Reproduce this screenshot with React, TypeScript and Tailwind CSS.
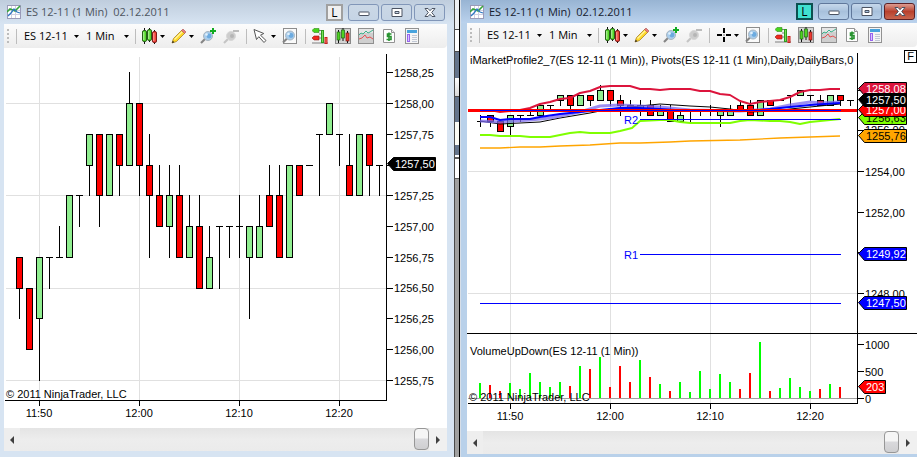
import React from "react";
import clsx from "clsx";

// Levels are quarter points below 1258, so 0 = 1258,00 and 4 = 1257,00
// [direction, body top, body bottom, high, low]
type Bar = ["u" | "d" | "n", number, number, number, number];

const BARS: Bar[] = [
  ["d", 5, 6, 5, 7],
  ["d", 6, 8, 6, 8],
  ["u", 5, 7, 5, 9],
  ["n", 5, 5, 5, 6],
  ["n", 5, 5, 4, 5],
  ["u", 3, 5, 3, 5],
  ["n", 3, 3, 3, 4],
  ["u", 1, 2, 1, 3],
  ["d", 1, 3, 1, 4],
  ["u", 1, 3, 1, 3],
  ["d", 1, 2, 1, 3],
  ["u", 0, 2, -1, 2],
  ["d", 0, 2, 0, 3],
  ["d", 2, 3, 1, 5],
  ["d", 3, 4, 2, 4],
  ["u", 3, 4, 2, 5],
  ["d", 3, 5, 2, 5],
  ["u", 4, 5, 3, 5],
  ["d", 4, 6, 3, 6],
  ["u", 5, 6, 4, 6],
  ["n", 4, 4, 4, 6],
  ["n", 4, 4, 4, 5],
  ["n", 4, 4, 3, 5],
  ["u", 4, 5, 4, 7],
  ["u", 4, 5, 3, 5],
  ["d", 3, 4, 2, 4],
  ["d", 3, 5, 2, 5],
  ["u", 2, 5, 2, 5],
  ["d", 2, 3, 2, 3],
  ["n", 2, 2, 2, 2],
  ["n", 1, 1, 1, 3],
  ["u", 0, 1, 0, 1],
  ["n", 1, 1, 1, 2],
  ["d", 2, 3, 1, 3],
  ["u", 1, 3, 1, 3],
  ["d", 1, 2, 1, 3],
  ["n", 2, 2, 2, 3],
];

// [up, top of the bar]
const VOLUME: [boolean, number][] = [
  [true, 383], [false, 385], [false, 391], [true, 383], [true, 389], [true, 373], [true, 382],
  [true, 387], [true, 382], [false, 386], [true, 366], [false, 369], [true, 357], [false, 387],
  [false, 366], [false, 382], [true, 360], [false, 377], [true, 384], [false, 391], [true, 382],
  [true, 392], [true, 371], [true, 389], [true, 374], [true, 382], [false, 389], [false, 373],
  [true, 342], [false, 391], [true, 388], [true, 378], [true, 387], [true, 391], [false, 389],
  [true, 384], [false, 387],
];

const TIMES = ["11:50", "12:00", "12:10", "12:20"];
const PRICES = [
  "1258,25", "1258,00", "1257,75", "1257,50", "1257,25", "1257,00",
  "1256,75", "1256,50", "1256,25", "1256,00", "1255,75",
];

const Candles = ({ bars, x0, y0, step }: { bars: Bar[]; x0: number; y0: number; step: number }) => {
  const y = (level: number) => Math.round(y0 + level * step);
  return (
    <g shapeRendering="crispEdges">
      {bars.map(([dir, top, bottom, high, low], i) => {
        const x = x0 + i * 10;
        return (
          <g key={i}>
            <rect x={x} y={y(high)} width="1" height={y(low) - y(high) + 1} fill="#000" />
            <rect x={x - 3} y={y(top)} width="7" height={y(bottom) - y(top) + 1} fill="#000" />
            {dir !== "n" && (
              <rect
                x={x - 2}
                y={y(top) + 1}
                width="5"
                height={y(bottom) - y(top) - 1}
                fill={dir === "u" ? "#90ee90" : "#ff0000"}
              />
            )}
          </g>
        );
      })}
    </g>
  );
};

const PriceTag = ({ x, y, label, fill, color = "#fff", width = 48 }: {
  x: number;
  y: number;
  label: string;
  fill: string;
  color?: string;
  width?: number;
}) => (
  <g>
    <path
      d={`M${x + 0.5} ${y + 0.5}l6 -6h${width - 6}v13h-${width - 6}z`}
      fill={fill}
      stroke="#000"
    />
    <text x={x + 8} y={y + 5} fill={color}>{label}</text>
  </g>
);

const LeftChart = () => (
  <svg
    viewBox="4 48 443 380"
    className="block w-full bg-white text-[11px]"
    fontFamily="'Liberation Sans', Arial, sans-serif"
    role="img"
    aria-label="ES 12-11 candlestick chart"
  >
    <g shapeRendering="crispEdges" fill="#e0e0e0">
      {TIMES.map((t, i) => <rect key={t} x={39 + i * 100} y="57" width="1" height="343" />)}
      {[103, 195, 288, 380].map((y) => <rect key={y} x="6" y={y} width="380" height="1" />)}
    </g>
    <Candles bars={BARS} x0={19} y0={103} step={30.78} />
    <g shapeRendering="crispEdges">
      <rect x="386" y="54" width="1" height="347" />
      <rect x="5" y="400" width="382" height="1" />
      {TIMES.map((t, i) => <rect key={t} x={39 + i * 100} y="401" width="1" height="5" />)}
      {PRICES.map((p, i) => (
        <rect key={p} x="387" y={Math.round(72.2 + i * 30.78)} width="6" height="1" />
      ))}
    </g>
    {TIMES.map((t, i) => <text key={t} x={39 + i * 100} y="417" textAnchor="middle">{t}</text>)}
    {PRICES.map((p, i) => p !== "1257,50" && (
      <text key={p} x="394" y={Math.round(77 + i * 30.78)}>{p}</text>
    ))}
    <PriceTag x={387} y={163} label="1257,50" fill="#000" />
    <text x="6" y="398">© 2011 NinjaTrader, LLC</text>
  </svg>
);

const RightChart = () => (
  <svg
    viewBox="467 47 450 384"
    className="block w-full bg-white text-[11px]"
    fontFamily="'Liberation Sans', Arial, sans-serif"
    role="img"
    aria-label="ES 12-11 chart with pivots and volume"
  >
    <defs>
      <clipPath id="plot">
        <rect x="467" y="48" width="390" height="30" />
      </clipPath>
    </defs>
    <g shapeRendering="crispEdges" fill="#e0e0e0">
      {TIMES.map((t, i) => <rect key={t} x={510 + i * 100} y="54" width="1" height="349" />)}
      <rect x="468" y="171" width="389" height="1" />
      <rect x="468" y="293" width="389" height="1" />
    </g>

    <Candles bars={[["n", 6, 6, 5, 7], ...BARS]} x0={480} y0={90} step={5.09} />

    {/* indicators */}
    <g fill="none" strokeLinejoin="round">
      <polyline stroke="#ffa500" strokeWidth="1.3" points="480,148 500,148 520,147 540,147 560,146 590,145 620,143 640,143 670,142 690,141 740,140 780,138 810,137 840,136" />
      <polyline stroke="#7fff00" strokeWidth="2" points="480,135 490,135 500,136 520,136 530,137 550,137 560,135 570,133 580,132 590,133 610,133 620,131 632,128 640,121 660,120 670,120 680,122 690,123 730,123 740,121 750,120 770,121 780,121 790,122 800,124 810,122 820,121 840,119" />
      <polyline stroke="#000" strokeWidth="1" points="480,121 500,124 520,123 540,122 560,118 590,113 610,109 640,106 660,104 690,106 710,107 730,109 750,112 775,111 790,109 810,107 830,105 840,104" />
      <polyline stroke="#7b68ee" strokeOpacity="0.75" strokeWidth="3" points="480,121 500,122 530,120 550,118 565,115 580,112 600,106 620,105 640,106 660,107 690,110 740,111 770,109 790,105 810,102 820,103 840,102" />
      <polyline stroke="#0000ff" strokeWidth="2" points="480,117 490,117 500,120 510,119 530,119 540,117 560,114 580,112 600,110 620,108 640,108 660,109 690,111 720,110 750,111 770,109 790,107 810,105 840,103" />
      <polyline stroke="#dc143c" strokeWidth="2" points="480,111 490,110 500,112 520,110 530,108 540,104 550,102 560,99 570,98 580,93 590,91 600,87 610,86 630,86 640,89 650,89 660,90 670,89 690,89 700,91 710,91 720,94 730,95 740,101 750,104 760,102 770,101 780,100 790,97 800,92 810,90 820,90 830,89 840,89" />
    </g>
    <g shapeRendering="crispEdges">
      <rect x="468" y="109" width="389" height="3" fill="#ff0000" />
      <rect x="480" y="110" width="361" height="1" fill="#0000ff" />
      <rect x="640" y="119" width="201" height="1" fill="#0000ff" />
      <rect x="640" y="254" width="201" height="1" fill="#0000ff" />
      <rect x="480" y="303" width="361" height="1" fill="#0000ff" />
    </g>
    <text x="624" y="124" fill="#0000ff">R2</text>
    <text x="624" y="259" fill="#0000ff">R1</text>

    {/* volume panel */}
    <g shapeRendering="crispEdges">
      <rect x="468" y="398" width="389" height="1" fill="#a0a0a0" />
      {VOLUME.map(([up, top], i) => (
        <rect key={i} x={479 + i * 10} y={top} width="2" height={398 - top} fill={up ? "#00ff00" : "#ff0000"} />
      ))}
    </g>
    <text x="470" y="355">VolumeUpDown(ES 12-11 (1 Min))</text>
    <text x="469" y="401">© 2011 NinjaTrader, LLC</text>

    {/* axes */}
    <g shapeRendering="crispEdges">
      <rect x="857" y="53" width="1" height="351" />
      <rect x="467" y="333" width="450" height="1" />
      <rect x="468" y="403" width="390" height="1" />
      {TIMES.map((t, i) => <rect key={t} x={510 + i * 100} y="404" width="1" height="5" />)}
      {[90, 130, 171, 212, 252, 293, 344, 371, 398].map((y) => (
        <rect key={y} x="858" y={y} width="6" height="1" />
      ))}
    </g>
    {TIMES.map((t, i) => <text key={t} x={510 + i * 100} y="420" textAnchor="middle">{t}</text>)}
    <text x="865" y="134">1256,00</text>
    <text x="865" y="176">1254,00</text>
    <text x="865" y="217">1252,00</text>
    <text x="865" y="298">1248,00</text>
    <text x="865" y="349">1000</text>
    <text x="865" y="376">500</text>
    <text x="865" y="403">0</text>
    <PriceTag x={858} y={117} label="1256,63" fill="#7fff00" color="#000" />
    <PriceTag x={858} y={135} label="1255,76" fill="#ffa500" color="#000" />
    <PriceTag x={858} y={109} label="1257,00" fill="#ff0000" />
    <PriceTag x={858} y={88} label="1258.08" fill="#dc143c" />
    <PriceTag x={858} y={99} label="1257,50" fill="#000" />
    <PriceTag x={858} y={253} label="1249,92" fill="#0000ff" />
    <PriceTag x={858} y={302} label="1247,50" fill="#0000ff" />
    <PriceTag x={858} y={386} label="203" fill="#ff0000" width={27} />
    <text x="470" y="64" clipPath="url(#plot)">
      iMarketProfile2_7(ES 12-11 (1 Min)), Pivots(ES 12-11 (1 Min),Daily,DailyBars,0
    </text>
  </svg>
);

const Arrow = ({ className }: { className?: string }) => (
  <svg viewBox="0 0 5 3" className={clsx("w-[5px] h-[3px] shrink-0", className)}>
    <path d="M0 0h5L2.5 3z" fill="#000" />
  </svg>
);

const Icon = ({ children }: { children: React.ReactNode }) => (
  <svg viewBox="0 0 16 16" className="w-4 h-4 shrink-0">{children}</svg>
);

const Separator = () => <div className="w-px h-[15px] shrink-0 bg-[#bdbdbd]"></div>;

const Tool = ({ label, menu, children }: { label: string; menu?: boolean; children: React.ReactNode }) => (
  <button
    aria-label={label}
    className={clsx("flex items-center shrink-0 gap-0.5", menu ? "w-[23px]" : "w-[17px]")}
  >
    <Icon>{children}</Icon>
    {menu && <Arrow />}
  </button>
);

const Picker = ({ label, value, className }: { label: string; value: string; className: string }) => (
  <div className={clsx("relative shrink-0", className)}>
    <select aria-label={label} className="block w-full appearance-none bg-transparent pl-px text-[11px] leading-4 outline-none">
      <option>{value}</option>
    </select>
    <Arrow className="absolute right-0 top-[7px] pointer-events-none" />
  </div>
);

const Lens = ({ cx, cy }: { cx: number; cy: number }) => (
  <>
    <path d={`M${cx - 3} ${cy + 3}L${cx - 7} ${cy + 7}`} stroke="#858585" strokeWidth="2.2" />
    <circle cx={cx} cy={cy} r="4.5" fill="#a9cdec" stroke="#a8b5c0" />
    <circle cx={cx + 1} cy={cy} r="2.4" fill="#6cabe0" />
    <circle cx={cx - 1.5} cy={cy - 1.5} r="1.3" fill="#e2f1fc" />
  </>
);

const Toolbar = ({ cross }: { cross?: boolean }) => (
  <div className="h-6 pl-[3px] flex items-center gap-1.5 overflow-hidden rounded-br bg-gradient-to-b from-[#fcfcfc] to-[#ededed]">
    <div className="w-[3px] shrink-0 flex flex-col gap-0.5">
      <i className="block h-0.5 w-0.5 bg-[#bcbcbc]"></i>
      <i className="block h-0.5 w-0.5 bg-[#bcbcbc]"></i>
      <i className="block h-0.5 w-0.5 bg-[#bcbcbc]"></i>
      <i className="block h-0.5 w-0.5 bg-[#bcbcbc]"></i>
    </div>
    <Separator />
    <Picker label="Instrument" value="ES 12-11" className="w-14" />
    <Picker label="Interval" value="1 Min" className="w-11" />
    <Separator />
    <Tool label="Chart style" menu>
      <path d="M2.5 0v16M7.5 0v14M12.5 2v14" stroke="#111" />
      <rect x="0.5" y="2.5" width="4" height="11" rx="1.5" fill="#53d728" stroke="#275e19" />
      <rect x="5.5" y="1.5" width="4" height="11" rx="1.5" fill="#53d728" stroke="#275e19" />
      <rect x="10.5" y="3.5" width="4" height="11" rx="1.5" fill="#f0443a" stroke="#7c1c18" />
      <path d="M1.8 4v8M6.800 3v8" stroke="#c4f7b0" />
      <path d="M11.800 5v8" stroke="#ffaca6" />
    </Tool>
    <Tool label="Drawing tools" menu>
      <path d="M1 15l1.5-4.5L11 2l3 3-8.500 8.500z" fill="#ffd927" stroke="#a8812a" strokeWidth="0.8" />
      <path d="M3.500 11.500L11.500 3.500" stroke="#fff3a0" strokeWidth="1.200" />
      <path d="M10.500 2.500L12 1l3 3-1.500 1.500z" fill="#e77c7c" stroke="#a75050" strokeWidth="0.6" />
      <path d="M1 15l.8-2.300 1.500 1.500z" fill="#222" />
    </Tool>
    <Tool label="Zoom in">
      <Lens cx={8} cy={8} />
      <path d="M13 0v6M10 3h6" stroke="#11ab22" strokeWidth="2" />
    </Tool>
    <Tool label="Zoom out">
      <path d="M5 11L1 15" stroke="#c4c4c4" strokeWidth="2.200" />
      <circle cx="8" cy="8" r="4.500" fill="#cdcdcd" stroke="#d8d8d8" />
      <circle cx="9" cy="8" r="2" fill="#b5b5b5" />
      <path d="M10 3h6" stroke="#bcbcbc" strokeWidth="2" />
    </Tool>
    <Separator />
    <Tool label="Cursor" menu>
      {cross ? (
        <path d="M7 1h2v5H7zM7 10h2v5H7zM1 7h5v2H1zM10 7h5v2h-5zM7.500 7.500h1v1h-1z" fill="#000" />
      ) : (
        <path d="M1 1.500l2.500 10 2.300-2.800L11 14.500l2-2-5.500-5.300 3.300-1.700z" fill="#fff" stroke="#555" />
      )}
    </Tool>
    <Tool label="Zoom frame">
      <rect x="1.500" y="0.500" width="13" height="15" fill="#fafafa" stroke="#8d8d8d" />
      <Lens cx={8} cy={7.500} />
    </Tool>
    <Separator />
    <Tool label="Chart trader">
      <path d="M7 2.500h4M7 6h4M7 10h4M0 15h16" stroke="#7e7e7e" />
      <path d="M0 2.500L2 .5h5v4H2z" fill="#46d61b" stroke="#338a1b" strokeWidth="0.600" />
      <path d="M0 10l2-2h5v4H2z" fill="#f02a1e" stroke="#8d1c15" strokeWidth="0.600" />
      <path d="M10.500 2v13" stroke="#2f9a20" strokeWidth="3" />
      <path d="M10.500 3v11" stroke="#73e256" />
      <path d="M14 9v7" stroke="#c3221d" strokeWidth="3" />
      <path d="M14 10v5" stroke="#ff746d" />
    </Tool>
    <Tool label="Data series">
      <rect x="0.500" y="0.500" width="15" height="15" fill="#d4d4d4" stroke="#8a8a8a" />
      <path d="M3.500 2v13M8 0v13M12.500 3v12" stroke="#111" />
      <rect x="2" y="4" width="3" height="8" fill="#4ed221" stroke="#236018" strokeWidth="0.700" />
      <rect x="6.500" y="2" width="3" height="8" fill="#4ed221" stroke="#236018" strokeWidth="0.700" />
      <rect x="11" y="5" width="3" height="8" fill="#ef3930" stroke="#761a16" strokeWidth="0.700" />
    </Tool>
    <Tool label="Indicators">
      <rect x="0.500" y="0.500" width="15" height="15" fill="#cfcfcf" stroke="#8f8f8f" />
      <path d="M1 1h14v4H1z" fill="#e5e5e5" />
      <path d="M1 7l2-2 2 1 3-3 2 2 2-1 3-2" fill="none" stroke="#3bb28a" />
      <path d="M1 11l3-1 3-3 2 3 3-1 3 2" fill="none" stroke="#e45353" />
    </Tool>
    <Tool label="Strategies">
      <path d="M2.500 1.500h8l3 3v10h-11z" fill="#fff" stroke="#929292" />
      <path d="M10.500 1.500v3h3" fill="#eee" stroke="#929292" />
      <path d="M10.500 6H6.500v2.500h3.500V11.500H5.500M8 4.500v8.500" fill="none" stroke="#279330" strokeWidth="1.600" />
    </Tool>
    <Tool label="Properties">
      <rect x="1.500" y="0.500" width="13" height="15" fill="#f5f5f5" stroke="#929292" />
      <path d="M3 3.500h10" stroke="#47a3dd" strokeWidth="3" />
      <rect x="3.500" y="6.500" width="2" height="7" fill="#d8c4ff" stroke="#9864ee" />
      <path d="M8 7.500h5M8 9.500h5M8 11.500h5M8 13.500h5" stroke="#c1c8d5" />
    </Tool>
  </div>
);

const CaptionButton = ({ label, active, close, children }: {
  label: string;
  active?: boolean;
  close?: boolean;
  children: React.ReactNode;
}) => (
  <button
    aria-label={label}
    className={clsx(
      "w-[31px] h-[17px] flex items-center justify-center rounded-[3px] border bg-gradient-to-b",
      !active && "border-[#8196b8] from-[#cbd8e6] to-[#c5d4e5]",
      active && !close && "border-[#60789b] from-[#c6d8eb] via-[#a8c1dc] to-[#b7cfe8]",
      active && close && "border-[#5c2025] from-[#dc9b91] via-[#b8402d] to-[#c8654e]"
    )}
  >
    <svg viewBox="0 0 12 9" className="w-3 h-[9px]" fill="#fff" stroke="#4b5362">{children}</svg>
  </button>
);

const TitleBar = ({ active }: { active?: boolean }) => (
  <div
    className={clsx(
      "flex items-center bg-gradient-to-b",
      active
        ? "h-[23px] pl-[9px] pr-0.5 from-[#98b4d3] to-[#bad2ed]"
        : "h-6 pl-[7px] pr-[9px] from-[#bfcddd] to-[#d7e4f2]"
    )}
  >
    <svg viewBox="0 0 14 14" className="w-3.5 h-3.5 shrink-0">
      <rect x="0.500" y="0.500" width="13" height="13" fill="#fff" stroke="#9a9ab8" />
      <path d="M4.500 1v12M8.500 1v12M1 5.500h12M1 9.500h12" stroke="#cfcfe2" />
      <path d="M0 7l3-3 3 1 2 1 5-5" fill="none" stroke="#36a43b" strokeWidth="1.600" />
      <path d="M1 11l3-3 3-4 3 3 3 1" fill="none" stroke="#2f78c4" strokeWidth="1.300" />
    </svg>
    <h2 className={clsx("ml-[5px] flex-1 truncate whitespace-pre text-[11px] leading-4", active ? "text-[#15202e]" : "text-[#4d5560]")}>
      {"ES 12-11 (1 Min)  02.12.2011"}
    </h2>
    <div className="flex gap-0.5">
      <button
        aria-label="Link"
        className={clsx(
          "w-[17px] h-[17px] mr-[3px] border-2 text-xs leading-[13px]",
          active ? "border-[#0c5050] bg-[#40e0d0]" : "border-[#a0a0a0] bg-[#f0f0f0]"
        )}
      >
        L
      </button>
      <CaptionButton label="Minimize" active={active}>
        <rect x="1" y="4" width="10" height="3.500" rx="0.500" />
      </CaptionButton>
      <CaptionButton label="Maximize" active={active}>
        <path fillRule="evenodd" d="M1 .5h10v8H1zM4 3.500h4v2H4z" />
      </CaptionButton>
      <CaptionButton label="Close" active={active} close>
        <path d="M1 .5h3l2 2.200L8 .5h3L7.700 4.500 11 8.500H8L6 6.300 4 8.500H1l3.300-4z" />
      </CaptionButton>
    </div>
  </div>
);

const ScrollBar = () => (
  <div className="h-[23px] flex items-center bg-gradient-to-b from-[#e4e4e4] via-[#ededed] to-[#ebebeb]">
    <button aria-label="Scroll left" className="w-4 h-full flex items-center justify-center bg-[#eeeeee]">
      <svg viewBox="0 0 4 8" className="w-1 h-2"><path d="M4 0v8L0 4z" fill="#404040" /></svg>
    </button>
    <div className="flex-1 h-full flex justify-end">
      <div
        role="scrollbar"
        aria-label="Time"
        aria-controls="charts"
        aria-valuenow={100}
        className="w-[15px] h-[22px] rounded-sm border border-[#979797] bg-gradient-to-b from-[#f5f5f5] from-45% via-[#d9d9dc] via-50% to-[#cfcfd1]"
      ></div>
    </div>
    <button aria-label="Scroll right" className="w-[18px] h-full flex items-center justify-center bg-[#f0f0f0]">
      <svg viewBox="0 0 4 8" className="w-1 h-2"><path d="M0 0v8l4-4z" fill="#404040" /></svg>
    </button>
  </div>
);

// Sliver of the windows that lie behind the two charts
const Gutter = () => (
  <div className="flex border-l border-r border-l-[#4a4a4a] border-r-[#d6dee8] bg-[#a0a0a0]">
    <div className="flex-1 flex flex-col">
      <div className="h-[30px] bg-[#eef0f2] border-b border-[#4a4a4a]"></div>
      <div className="h-[22px] bg-white border-b border-[#4a4a4a]"></div>
      <div className="h-[26px] bg-[#64748b]"></div>
      <div className="h-[19px] bg-gradient-to-b from-white to-[#d9d9d9] border-b border-[#4a4a4a]"></div>
      <div className="h-[25px] bg-[#64748b]"></div>
      <div className="h-[23px] bg-[#fbfbf4]"></div>
      <div className="h-[12px] bg-[#64748b] border-b-2 border-white"></div>
      <div className="h-[22px] bg-white border-t-2 border-b border-[#5c5c5c]"></div>
    </div>
    <div className="w-px bg-black"></div>
  </div>
);

const App = () => {
  return (
    <main
      id="charts"
      className="grid grid-cols-[454fr_7px_456fr] min-h-screen text-black font-['Open_Sans','Segoe_UI',sans-serif]"
    >
      <section className="min-w-0 bg-[#d7e4f2]">
        <TitleBar />
        <div className="pl-1 pr-[7px]">
          <div className="bg-white">
            <Toolbar />
          </div>
          <LeftChart />
          <ScrollBar />
        </div>
      </section>

      <Gutter />

      <section className="min-w-0 bg-[#b9d1ea]">
        <TitleBar active />
        <div className="pl-1.5">
          <div className="bg-white">
            <Toolbar cross />
          </div>
          <div className="relative">
            <RightChart />
            <button className="absolute right-0 top-[3px] w-[13px] h-[13px] border border-black bg-white text-center text-[11px] leading-[11px] font-['Liberation_Sans',sans-serif]">
              F
            </button>
          </div>
          <ScrollBar />
        </div>
      </section>
    </main>
  );
};

export default App;
